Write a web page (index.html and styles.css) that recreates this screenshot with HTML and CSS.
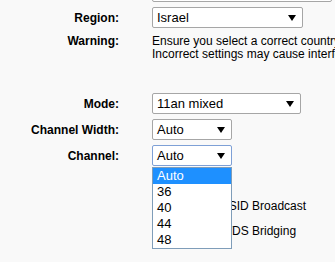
FILE: index.html
```html
<!DOCTYPE html>
<html>
<head>
<meta charset="utf-8">
<link rel="stylesheet" href="styles.css">
</head>
<body>
<div class="form">
  <div class="row row-top">
    <div class="label"></div>
    <div class="select w-top"><span></span></div>
  </div>
  <div class="row">
    <div class="label">Region:</div>
    <div class="select w-wide"><span>Israel</span><svg class="arrow" width="8" height="6" viewBox="0 0 8 6"><polygon points="0,0 8,0 4,6" fill="#000"/></svg></div>
  </div>
  <div class="row row-warn">
    <div class="label">Warning:</div>
    <div class="warn">Ensure you select a correct country to conform local law.<br>Incorrect settings may cause interference.</div>
  </div>
  <div class="row">
    <div class="label">Mode:</div>
    <div class="select w-mode"><span>11an mixed</span><svg class="arrow" width="8" height="6" viewBox="0 0 8 6"><polygon points="0,0 8,0 4,6" fill="#000"/></svg></div>
  </div>
  <div class="row">
    <div class="label">Channel Width:</div>
    <div class="select w-small"><span>Auto</span><svg class="arrow" width="8" height="6" viewBox="0 0 8 6"><polygon points="0,0 8,0 4,6" fill="#000"/></svg></div>
  </div>
  <div class="row">
    <div class="label">Channel:</div>
    <div class="select w-small focus"><span>Auto</span><svg class="arrow" width="8" height="6" viewBox="0 0 8 6"><polygon points="0,0 8,0 4,6" fill="#000"/></svg></div>
  </div>
  <div class="row row-check first-check">
    <div class="label"></div>
    <label class="check"><span class="box"></span>Enable SSID Broadcast</label>
  </div>
  <div class="row row-check">
    <div class="label"></div>
    <label class="check"><span class="box"></span>Enable WDS Bridging</label>
  </div>
</div>
<ul class="dropdown">
  <li class="sel">Auto</li>
  <li>36</li>
  <li>40</li>
  <li>44</li>
  <li>48</li>
</ul>
</body>
</html>
```

FILE: styles.css
```css
html, body {
  margin: 0;
  padding: 0;
  background: #f9f9f9;
  font-family: "Liberation Sans", Arial, sans-serif;
  font-size: 12px;
  color: #000;
  overflow: hidden;
}
.form {
  display: flex;
  flex-direction: column;
  gap: 5px;
  margin-top: -19px;
}
.row {
  display: grid;
  grid-template-columns: 119px 1fr;
  column-gap: 33px;
  align-items: center;
}
.label {
  text-align: right;
  font-weight: bold;
  font-size: 12px;
  white-space: nowrap;
}
.select {
  box-sizing: border-box;
  height: 21px;
  background: #fff;
  border: 1px solid #a6a6a6;
  border-radius: 2px;
  display: flex;
  align-items: center;
  justify-content: space-between;
  padding: 0 6px 0 4px;
  font-size: 13px;
  white-space: nowrap;
}
.select.focus {
  border-color: #7ea0d6;
}
.arrow {
  display: block;
  margin-top: 1px;
}
.w-top { width: 180px; }
.w-wide { width: 151px; }
.w-mode { width: 149px; }
.w-small { width: 80px; }
.row-warn {
  margin-top: 2px;
  margin-bottom: 27px;
  align-items: start;
}
.row-warn .label {
  line-height: 13px;
}
.warn {
  line-height: 13px;
  white-space: nowrap;
}
.row-check {
  height: 20px;
}
.first-check {
  margin-top: 25px;
}
.check {
  display: flex;
  align-items: center;
  white-space: nowrap;
}
.box {
  box-sizing: border-box;
  width: 13px;
  height: 13px;
  margin-left: 3px;
  margin-right: 12px;
  border: 1px solid #8f8f8f;
  border-radius: 2px;
  background: #fff;
}
.dropdown {
  position: absolute;
  left: 152px;
  top: 167px;
  width: 80px;
  box-sizing: border-box;
  margin: 0;
  padding: 0;
  list-style: none;
  background: #fff;
  border: 1px solid #7f9db9;
  font-size: 13px;
}
.dropdown li {
  height: 16px;
  line-height: 16px;
  padding-left: 4px;
}
.dropdown li.sel {
  background: #1e90ff;
  color: #fff;
}
```
